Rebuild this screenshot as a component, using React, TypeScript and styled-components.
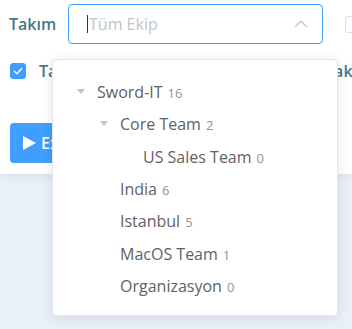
import React from "react";
import styled, { createGlobalStyle } from "styled-components";

const GlobalStyle = createGlobalStyle`
  html, body {
    margin: 0;
    padding: 0;
    overflow: hidden;
    background: #eaf0fa;
    font-family: "Open Sans", "Noto Sans", sans-serif;
  }
`;

const Page = styled.div`
  position: relative;
  width: 352px;
  height: 329px;
  overflow: hidden;
`;

const Panel = styled.section`
  background: #fff;
  padding: 4px 0 11px 9px;
  box-shadow: 0 2px 8px rgba(80, 100, 130, 0.12);
  white-space: nowrap;
`;

const FormRow = styled.div`
  display: flex;
  align-items: center;
  gap: 22px;
  height: 40px;
`;

const Field = styled.div`
  display: flex;
  align-items: center;
`;

const Label = styled.label`
  width: 59px;
  flex: none;
  font-size: 16px;
  font-weight: 600;
  color: #467888;
`;

const SelectWrap = styled.div`
  position: relative;
  flex: none;
  width: 255px;
`;

const SelectBox = styled.div`
  box-sizing: border-box;
  height: 40px;
  border: 1px solid #409eff;
  border-radius: 4px;
  display: flex;
  align-items: center;
  padding: 0 14px 0 18px;
`;

const Placeholder = styled.span`
  flex: 1;
  font-size: 16px;
  color: #c0c4cc;
  border-left: 1px solid #303133;
  padding-left: 1px;
  line-height: 18px;
`;

const Box = styled.span<{ $checked?: boolean; $size?: number }>`
  box-sizing: border-box;
  flex: none;
  width: ${(p) => p.$size ?? 16}px;
  height: ${(p) => p.$size ?? 16}px;
  border-radius: 3px;
  border: 1px solid ${(p) => (p.$checked ? "#409eff" : "#dcdfe6")};
  background: ${(p) => (p.$checked ? "#409eff" : "#fff")};
  display: flex;
  align-items: center;
  justify-content: center;
`;

const CheckRow = styled.div`
  display: flex;
  align-items: center;
  gap: 13px;
  margin-top: 19px;
  padding-left: 1px;
  height: 16px;
  font-size: 16px;
  font-weight: 600;
  letter-spacing: 0.08px;
  color: #467888;
`;

const ExportButton = styled.button`
  margin-top: 44px;
  margin-left: 1px;
  height: 40px;
  padding: 0 20px 0 13px;
  border: none;
  border-radius: 4px;
  background: #409eff;
  color: #fff;
  font-family: inherit;
  font-size: 16px;
  font-weight: 600;
  display: flex;
  align-items: center;
  gap: 5px;
`;

const Dropdown = styled.div`
  position: absolute;
  left: -16px;
  top: 55px;
  z-index: 10;
  box-sizing: border-box;
  width: 286px;
  height: 257px;
  padding-top: 16px;
  background: #fff;
  border: 1px solid #e4e7ed;
  border-radius: 4px;
  box-shadow: 0 2px 12px rgba(0, 0, 0, 0.1);
`;

const TreeRow = styled.div<{ $level: number }>`
  display: flex;
  align-items: center;
  height: 32.3px;
  padding-left: ${(p) => 19 + p.$level * 23}px;
  font-size: 16px;
  color: #606266;
`;

const Caret = styled.span<{ $open?: boolean }>`
  flex: none;
  width: 25px;
  display: flex;
  align-items: center;
  &::before {
    content: "";
    display: ${(p) => (p.$open ? "block" : "none")};
    margin-left: 5px;
    margin-top: -2px;
    border-left: 4.5px solid transparent;
    border-right: 4.5px solid transparent;
    border-top: 5px solid #c0c4cc;
  }
`;

const Count = styled.span`
  margin-left: 5px;
  font-size: 13px;
  color: #909399;
  padding-top: 2px;
`;

const nodes = [
  { name: "Sword-IT", count: 16, level: 0, open: true },
  { name: "Core Team", count: 2, level: 1, open: true },
  { name: "US Sales Team", count: 0, level: 2 },
  { name: "India", count: 6, level: 1 },
  { name: "Istanbul", count: 5, level: 1 },
  { name: "MacOS Team", count: 1, level: 1 },
  { name: "Organizasyon", count: 0, level: 1 },
];

export default function App() {
  return (
    <Page>
      <GlobalStyle />
      <Panel>
        <FormRow>
          <Field>
            <Label>Takım</Label>
            <SelectWrap>
              <SelectBox>
                <Placeholder>Tüm Ekip</Placeholder>
                <svg width="14" height="8" viewBox="0 0 14 8">
                  <path d="M1 7 L7 1.2 L13 7" fill="none" stroke="#c0c4cc" strokeWidth="1.3" />
                </svg>
              </SelectBox>
              <Dropdown>
                {nodes.map((n) => (
                  <TreeRow key={n.name} $level={n.level}>
                    <Caret $open={n.open} />
                    {n.name}
                    <Count>{n.count}</Count>
                  </TreeRow>
                ))}
              </Dropdown>
            </SelectWrap>
          </Field>
          <Box $size={17} />
        </FormRow>
        <CheckRow>
          <Box $checked>
            <svg width="10" height="8" viewBox="0 0 10 8">
              <path d="M1 4 L4 6.8 L9 1.2" fill="none" stroke="#fff" strokeWidth="1.3" />
            </svg>
          </Box>
          Takım Üyelerini Ayrı Ayrı Sayfalara Bırak
        </CheckRow>
        <ExportButton>
          <svg width="13" height="14" viewBox="0 0 13 14">
            <path d="M0 0 L13 7 L0 14 Z" fill="#fff" />
          </svg>
          Excel'e Aktar
        </ExportButton>
      </Panel>
    </Page>
  );
}
